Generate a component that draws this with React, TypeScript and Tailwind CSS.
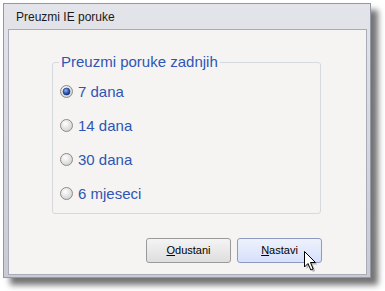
import type { ReactNode } from 'react'

const options = ['7 dana', '14 dana', '30 dana', '6 mjeseci']

function Radio({ checked }: { checked?: boolean }) {
  return (
    <svg width="13" height="13" viewBox="0 0 13 13" className="shrink-0">
      <defs>
        <radialGradient id="rbg" cx="40%" cy="35%" r="70%">
          <stop offset="0%" stopColor="#ffffff" />
          <stop offset="100%" stopColor="#cfcfcf" />
        </radialGradient>
        <radialGradient id="rdot" cx="40%" cy="35%" r="70%">
          <stop offset="0%" stopColor="#8fb6f0" />
          <stop offset="60%" stopColor="#2b59b5" />
          <stop offset="100%" stopColor="#10286e" />
        </radialGradient>
      </defs>
      <circle cx="6.5" cy="6.5" r="6" fill="url(#rbg)" stroke="#8c8c8c" strokeWidth="1" />
      {checked && <circle cx="6.5" cy="6.5" r="3.5" fill="url(#rdot)" stroke="#1b2f66" strokeWidth="0.6" />}
    </svg>
  )
}

function Button({ hot, children }: { hot?: boolean; children: ReactNode }) {
  return (
    <button
      className={
        hot
          ? 'flex h-[25px] w-[85px] items-center justify-center rounded-[3px] border border-[#8d9bc4] bg-gradient-to-b from-[#eef2fd] to-[#d6e0fa] text-[11px] text-black'
          : 'flex h-[25px] w-[85px] items-center justify-center rounded-[3px] border border-[#9a9a9a] bg-gradient-to-b from-[#f4f4f4] to-[#dedede] text-[11px] text-black'
      }
    >
      {children}
    </button>
  )
}

export default function App() {
  return (
    <div className="relative h-[291px] w-[385px] bg-white font-['Liberation_Sans',Arial,sans-serif]">
      <div className="ml-[3px] pt-[3px]">
        <div className="flex h-[275px] w-[368px] flex-col border border-[#9498a4] bg-gradient-to-b from-[#e4e5ea] to-[#c9cbd4] pb-[2px] pl-[4px] pr-[3px] shadow-[7px_7px_6px_rgba(0,0,0,0.55)]">
          <div className="flex h-[25px] items-center pl-[8px] pt-[1px] text-[12px] text-[#1a1a1a]">Preuzmi IE poruke</div>
          <div className="flex flex-1 flex-col border border-[#a9acb8] bg-[#f5f4f2]">
            <fieldset className="ml-[43px] mt-[23px] h-[161px] w-[269px] rounded-[3px] border border-[#d4d9de] px-0 pb-0 pt-0">
              <legend className="ml-[6px] px-[2px] text-[15px] leading-[18px] text-[#2f55b4]">Preuzmi poruke zadnjih</legend>
              <div className="flex flex-col gap-[21px] pl-[7px] pt-[14px]">
                {options.map((o, i) => (
                  <label key={o} className="flex h-[13px] items-center gap-[5px] text-[15px] text-[#2f55b4]">
                    <Radio checked={i === 0} />
                    <span className="leading-[13px]">{o}</span>
                  </label>
                ))}
              </div>
            </fieldset>
            <div className="mt-auto mb-[11px] mr-[44px] flex justify-end gap-[6px]">
              <Button>
                <span className="underline">O</span>dustani
              </Button>
              <Button hot>
                <span className="underline">N</span>astavi
              </Button>
            </div>
          </div>
        </div>
      </div>
      <svg className="absolute left-[304px] top-[251px]" width="16" height="22" viewBox="0 0 16 22">
        <path d="M2.5 2.5 L2.5 18 L6 14.5 L8.8 21 L11.2 20 L8.5 13.5 L13.5 13.5 Z" fill="rgba(0,0,0,0.25)" />
        <path d="M0.5 0.5 L0.5 16 L4 12.5 L6.8 19 L9.2 18 L6.5 11.5 L11.5 11.5 Z" fill="#ffffff" stroke="#000000" strokeWidth="1" strokeLinejoin="miter" />
      </svg>
    </div>
  )
}
